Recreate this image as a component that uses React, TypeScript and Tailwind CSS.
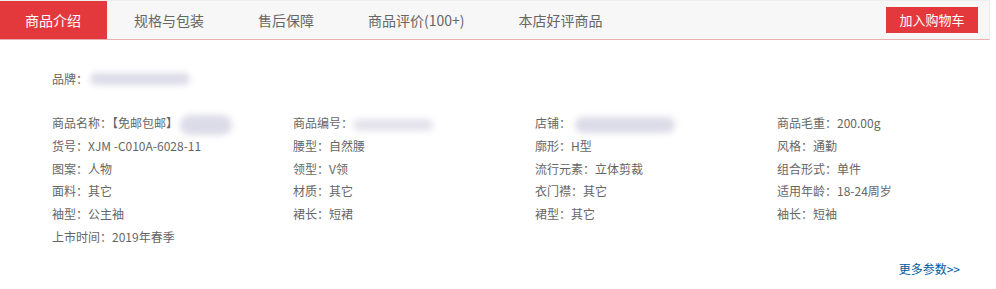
import React from "react";

const font = { fontFamily: '"Microsoft YaHei", "Noto Sans CJK SC", "Noto Sans", sans-serif' };

function Blur({ w, h, className = "" }: { w: string; h: string; className?: string }) {
  return <span className={`inline-block align-middle rounded-full bg-[#dcdbe8] blur-[3px] ${w} ${h} ${className}`} />;
}

const rows: React.ReactNode[][] = [
  [
    <span>商品名称：【免邮包邮】<Blur w="w-[52px]" h="h-[20px]" className="ml-[2px] bg-[#d7d6e0]" /></span>,
    <span>商品编号：<Blur w="w-[80px]" h="h-[12px]" className="bg-[#e4e3ec]" /></span>,
    <span>店铺：<Blur w="w-[100px]" h="h-[16px]" className="ml-[4px]" /></span>,
    <span>商品毛重：200.00g</span>,
  ],
  [<span>货号：XJM -C010A-6028-11</span>, <span>腰型：自然腰</span>, <span>廓形：H型</span>, <span>风格：通勤</span>],
  [<span>图案：人物</span>, <span>领型：V领</span>, <span>流行元素：立体剪裁</span>, <span>组合形式：单件</span>],
  [<span>面料：其它</span>, <span>材质：其它</span>, <span>衣门襟：其它</span>, <span>适用年龄：18-24周岁</span>],
  [<span>袖型：公主袖</span>, <span>裙长：短裙</span>, <span>裙型：其它</span>, <span>袖长：短袖</span>],
  [<span>上市时间：2019年春季</span>, <span />, <span />, <span />],
];

export default function App() {
  const tabs = ["规格与包装", "售后保障", "商品评价(100+)", "本店好评商品"];
  return (
    <div className="w-[996px] h-[289px] bg-white overflow-hidden" style={font}>
      <div className="w-[990px] flex items-stretch h-[40px] bg-[#f7f7f7] border-t border-r border-[#eeeeee] border-b border-b-[#e9b0b1]">
        <div className="bg-[#e4393c] text-white text-[14px] px-[25px] w-[107px] flex items-center">商品介绍</div>
        {tabs.map((t) => (
          <div key={t} className="text-[14px] text-[#666] px-[27px] flex items-center">{t}</div>
        ))}
        <div className="flex-1" />
        <div className="flex items-center pr-[11px]">
          <div className="bg-[#e4393c] text-white text-[13px] w-[92px] h-[26px] flex items-center justify-center">加入购物车</div>
        </div>
      </div>
      <div className="pl-[52px] pt-[27px] text-[12px] text-[#666]">
        <div className="h-[23px] leading-[23px] flex items-center">
          品牌：<Blur w="w-[100px]" h="h-[12px]" className="ml-[2px]" />
        </div>
        <div className="mt-[22px] grid grid-cols-[241px_242px_242px_1fr]">
          {rows.map((r, i) =>
            r.map((c, j) => (
              <div key={`${i}-${j}`} className="h-[22.8px] leading-[22.8px] flex items-center whitespace-nowrap">{c}</div>
            ))
          )}
        </div>
        <div className="flex justify-end pr-[36px] mt-[11px]">
          <span className="text-[#005aa0] text-[12px]">更多参数&gt;&gt;</span>
        </div>
      </div>
    </div>
  );
}
